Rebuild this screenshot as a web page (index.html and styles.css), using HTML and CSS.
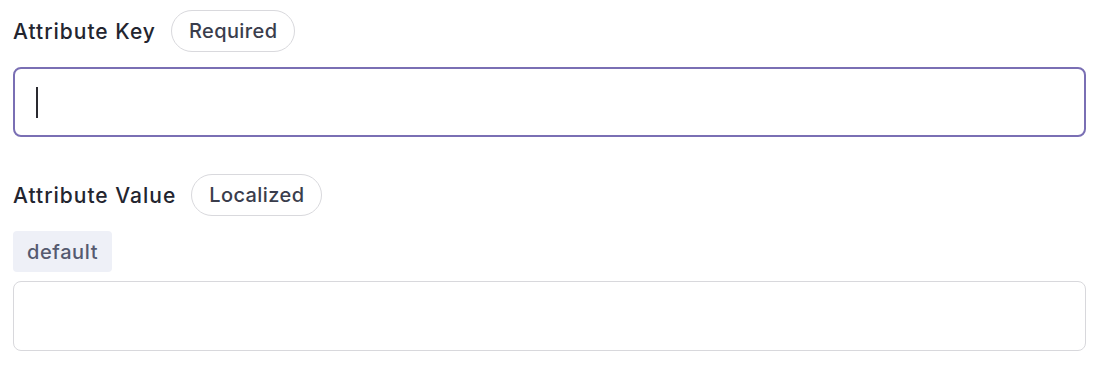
FILE: index.html
```html
<!DOCTYPE html>
<html lang="en">
<head>
    <meta charset="UTF-8">
    <meta name="viewport" content="width=device-width, initial-scale=1.0">
    <title>Attribute</title>
    <link rel="stylesheet" href="styles.css">
</head>
<body>
    <div class="form">
        <div class="field">
            <div class="field-head">
                <label class="field-label" for="attr-key">Attribute Key</label>
                <span class="pill">Required</span>
            </div>
            <div class="input focused"><span class="caret"></span></div>
        </div>
        <div class="field second">
            <div class="field-head">
                <label class="field-label">Attribute Value</label>
                <span class="pill">Localized</span>
            </div>
            <div class="locale">default</div>
            <div class="input tight"></div>
        </div>
    </div>
</body>
</html>
```

FILE: styles.css
```css
body {
    margin: 0;
    padding: 0;
    font-family: 'Inter', 'Noto Sans', sans-serif;
    background: #fff;
    color: #1f2230;
}
.form {
    padding: 10px 14px 0 13px;
    display: flex;
    flex-direction: column;
}
.field {
    display: flex;
    flex-direction: column;
}
.field.second {
    margin-top: 37px;
}
.field-head {
    display: flex;
    align-items: center;
    gap: 15px;
    height: 42px;
}
.field-label {
    font-size: 21px;
    font-weight: 500;
    letter-spacing: 1px;
    color: #23252f;
}
.pill {
    display: flex;
    align-items: center;
    height: 40px;
    padding: 0 17px;
    border: 1px solid #d9d9dd;
    border-radius: 21px;
    font-size: 20px;
    font-weight: 500;
    letter-spacing: 0.4px;
    color: #3a3d4c;
}
.input {
    margin-top: 15px;
    height: 68px;
    border: 1px solid #d8d8dc;
    border-radius: 8px;
    display: flex;
    align-items: center;
    padding-left: 22px;
}
.input.focused {
    border: 2px solid #7a6fb4;
    height: 66px;
    padding-left: 21px;
}
.input.tight {
    margin-top: 9px;
}
.caret {
    width: 2px;
    height: 31px;
    background: #2a2a30;
}
.locale {
    margin-top: 15px;
    align-self: flex-start;
    height: 41px;
    padding: 0 14px;
    display: flex;
    align-items: center;
    background: #eef0f7;
    border-radius: 4px;
    font-size: 20px;
    font-weight: 500;
    letter-spacing: 0.6px;
    color: #555a70;
}
```
